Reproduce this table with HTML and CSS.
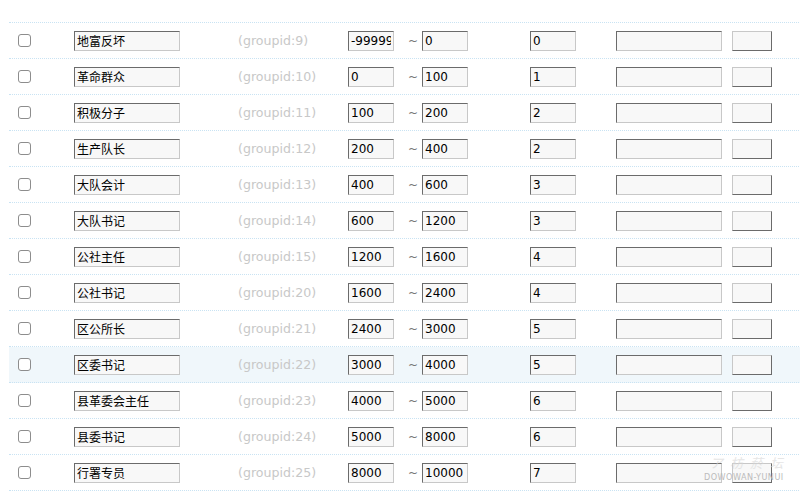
FILE: index.html
```html
<!DOCTYPE html>
<html>
<head>
<meta charset="utf-8">
<link rel="stylesheet" href="styles.css">
</head>
<body>
<div class="table">
  <div class="row"><div class="c-chk"><input type="checkbox" class="chk"></div><div class="c-name"><input class="inp name" value="地富反坏"></div><div class="c-gid">(groupid:9)</div><div class="c-min"><input class="inp num" value="-99999"></div><div class="c-tilde">~</div><div class="c-max"><input class="inp num" value="0"></div><div class="c-val"><input class="inp num" value="0"></div><div class="c-wide"><input class="inp wide" value=""></div><div class="c-sm"><input class="inp sm" value=""></div></div>
  <div class="row"><div class="c-chk"><input type="checkbox" class="chk"></div><div class="c-name"><input class="inp name" value="革命群众"></div><div class="c-gid">(groupid:10)</div><div class="c-min"><input class="inp num" value="0"></div><div class="c-tilde">~</div><div class="c-max"><input class="inp num" value="100"></div><div class="c-val"><input class="inp num" value="1"></div><div class="c-wide"><input class="inp wide" value=""></div><div class="c-sm"><input class="inp sm" value=""></div></div>
  <div class="row"><div class="c-chk"><input type="checkbox" class="chk"></div><div class="c-name"><input class="inp name" value="积极分子"></div><div class="c-gid">(groupid:11)</div><div class="c-min"><input class="inp num" value="100"></div><div class="c-tilde">~</div><div class="c-max"><input class="inp num" value="200"></div><div class="c-val"><input class="inp num" value="2"></div><div class="c-wide"><input class="inp wide" value=""></div><div class="c-sm"><input class="inp sm" value=""></div></div>
  <div class="row"><div class="c-chk"><input type="checkbox" class="chk"></div><div class="c-name"><input class="inp name" value="生产队长"></div><div class="c-gid">(groupid:12)</div><div class="c-min"><input class="inp num" value="200"></div><div class="c-tilde">~</div><div class="c-max"><input class="inp num" value="400"></div><div class="c-val"><input class="inp num" value="2"></div><div class="c-wide"><input class="inp wide" value=""></div><div class="c-sm"><input class="inp sm" value=""></div></div>
  <div class="row"><div class="c-chk"><input type="checkbox" class="chk"></div><div class="c-name"><input class="inp name" value="大队会计"></div><div class="c-gid">(groupid:13)</div><div class="c-min"><input class="inp num" value="400"></div><div class="c-tilde">~</div><div class="c-max"><input class="inp num" value="600"></div><div class="c-val"><input class="inp num" value="3"></div><div class="c-wide"><input class="inp wide" value=""></div><div class="c-sm"><input class="inp sm" value=""></div></div>
  <div class="row"><div class="c-chk"><input type="checkbox" class="chk"></div><div class="c-name"><input class="inp name" value="大队书记"></div><div class="c-gid">(groupid:14)</div><div class="c-min"><input class="inp num" value="600"></div><div class="c-tilde">~</div><div class="c-max"><input class="inp num" value="1200"></div><div class="c-val"><input class="inp num" value="3"></div><div class="c-wide"><input class="inp wide" value=""></div><div class="c-sm"><input class="inp sm" value=""></div></div>
  <div class="row"><div class="c-chk"><input type="checkbox" class="chk"></div><div class="c-name"><input class="inp name" value="公社主任"></div><div class="c-gid">(groupid:15)</div><div class="c-min"><input class="inp num" value="1200"></div><div class="c-tilde">~</div><div class="c-max"><input class="inp num" value="1600"></div><div class="c-val"><input class="inp num" value="4"></div><div class="c-wide"><input class="inp wide" value=""></div><div class="c-sm"><input class="inp sm" value=""></div></div>
  <div class="row"><div class="c-chk"><input type="checkbox" class="chk"></div><div class="c-name"><input class="inp name" value="公社书记"></div><div class="c-gid">(groupid:20)</div><div class="c-min"><input class="inp num" value="1600"></div><div class="c-tilde">~</div><div class="c-max"><input class="inp num" value="2400"></div><div class="c-val"><input class="inp num" value="4"></div><div class="c-wide"><input class="inp wide" value=""></div><div class="c-sm"><input class="inp sm" value=""></div></div>
  <div class="row"><div class="c-chk"><input type="checkbox" class="chk"></div><div class="c-name"><input class="inp name" value="区公所长"></div><div class="c-gid">(groupid:21)</div><div class="c-min"><input class="inp num" value="2400"></div><div class="c-tilde">~</div><div class="c-max"><input class="inp num" value="3000"></div><div class="c-val"><input class="inp num" value="5"></div><div class="c-wide"><input class="inp wide" value=""></div><div class="c-sm"><input class="inp sm" value=""></div></div>
  <div class="row hover"><div class="c-chk"><input type="checkbox" class="chk"></div><div class="c-name"><input class="inp name" value="区委书记"></div><div class="c-gid">(groupid:22)</div><div class="c-min"><input class="inp num" value="3000"></div><div class="c-tilde">~</div><div class="c-max"><input class="inp num" value="4000"></div><div class="c-val"><input class="inp num" value="5"></div><div class="c-wide"><input class="inp wide" value=""></div><div class="c-sm"><input class="inp sm" value=""></div></div>
  <div class="row"><div class="c-chk"><input type="checkbox" class="chk"></div><div class="c-name"><input class="inp name" value="县革委会主任"></div><div class="c-gid">(groupid:23)</div><div class="c-min"><input class="inp num" value="4000"></div><div class="c-tilde">~</div><div class="c-max"><input class="inp num" value="5000"></div><div class="c-val"><input class="inp num" value="6"></div><div class="c-wide"><input class="inp wide" value=""></div><div class="c-sm"><input class="inp sm" value=""></div></div>
  <div class="row"><div class="c-chk"><input type="checkbox" class="chk"></div><div class="c-name"><input class="inp name" value="县委书记"></div><div class="c-gid">(groupid:24)</div><div class="c-min"><input class="inp num" value="5000"></div><div class="c-tilde">~</div><div class="c-max"><input class="inp num" value="8000"></div><div class="c-val"><input class="inp num" value="6"></div><div class="c-wide"><input class="inp wide" value=""></div><div class="c-sm"><input class="inp sm" value=""></div></div>
  <div class="row"><div class="c-chk"><input type="checkbox" class="chk"></div><div class="c-name"><input class="inp name" value="行署专员"></div><div class="c-gid">(groupid:25)</div><div class="c-min"><input class="inp num" value="8000"></div><div class="c-tilde">~</div><div class="c-max"><input class="inp num" value="10000"></div><div class="c-val"><input class="inp num" value="7"></div><div class="c-wide"><input class="inp wide" value=""></div><div class="c-sm"><input class="inp sm" value=""></div></div>
</div>
<div class="watermark"><div class="wm-top">ア枋菸坛</div><div class="wm-bot">DOWOWAN-YUNUI</div></div>
</body>
</html>
```
FILE: styles.css
```css
html, body {
  margin: 0;
  padding: 0;
  background: #fff;
  overflow: hidden;
}
body {
  width: 800px;
  height: 497px;
  position: relative;
  font-family: "DejaVu Sans", Verdana, sans-serif;
}
.table {
  margin-top: 22px;
  margin-left: 9px;
  width: 800px;
  border-top: 1px dotted #c9e3f3;
}
.row {
  display: flex;
  align-items: center;
  height: 35px;
  border-bottom: 1px dotted #c9e3f3;
}
.row.hover {
  background: #f0f7fb;
}
.c-chk { width: 65px; padding-left: 9px; box-sizing: border-box; display: flex; align-items: center; }
.c-name { width: 164px; }
.c-gid { width: 110px; font-size: 12.6px; color: #c8c8c8; }
.c-min { width: 60px; }
.c-tilde { width: 14px; font-size: 12px; color: #777; }
.c-max { width: 108px; }
.c-val { width: 86px; }
.c-wide { width: 116px; }
.c-sm { width: 40px; }
.c-chk, .c-name, .c-gid, .c-min, .c-tilde, .c-max, .c-val, .c-wide, .c-sm { flex: none; }
.chk {
  appearance: none;
  -webkit-appearance: none;
  margin: 0;
  width: 13px;
  height: 13px;
  border: 1px solid #8d8d8d;
  border-radius: 3px;
  background: #fff;
  box-sizing: border-box;
}
.inp {
  display: block;
  box-sizing: border-box;
  height: 20px;
  margin: 0;
  padding: 0 2px;
  border: 1px solid;
  border-color: #6b6b6b #c8c8c8 #c8c8c8 #6b6b6b;
  background: #f8f8f8;
  color: #000;
  font-family: "DejaVu Sans", Verdana, sans-serif;
  font-size: 12px;
  outline: none;
}
.inp.name {
  width: 106px;
  font-family: "Noto Sans CJK SC", "DejaVu Sans", sans-serif;
  font-size: 12px;
}
.inp.num { width: 46px; }
.inp.wide { width: 106px; }
.inp.sm {
  width: 40px;
  border-color: #c8c8c8 #6b6b6b #6b6b6b #c8c8c8;
}
.watermark {
  position: absolute;
  left: 710px;
  top: 456px;
  color: #d6d6d6;
  line-height: 1;
  white-space: nowrap;
  pointer-events: none;
}
.wm-top {
  font-family: "Noto Sans CJK SC", sans-serif;
  font-size: 13px;
  font-style: italic;
  letter-spacing: 7px;
  opacity: 0.6;
}
.wm-bot {
  font-family: "DejaVu Sans Condensed", "DejaVu Sans", sans-serif;
  font-size: 9px;
  letter-spacing: 0.5px;
  color: #bbb;
  margin-top: 4px;
  margin-left: -6px;
}
```
